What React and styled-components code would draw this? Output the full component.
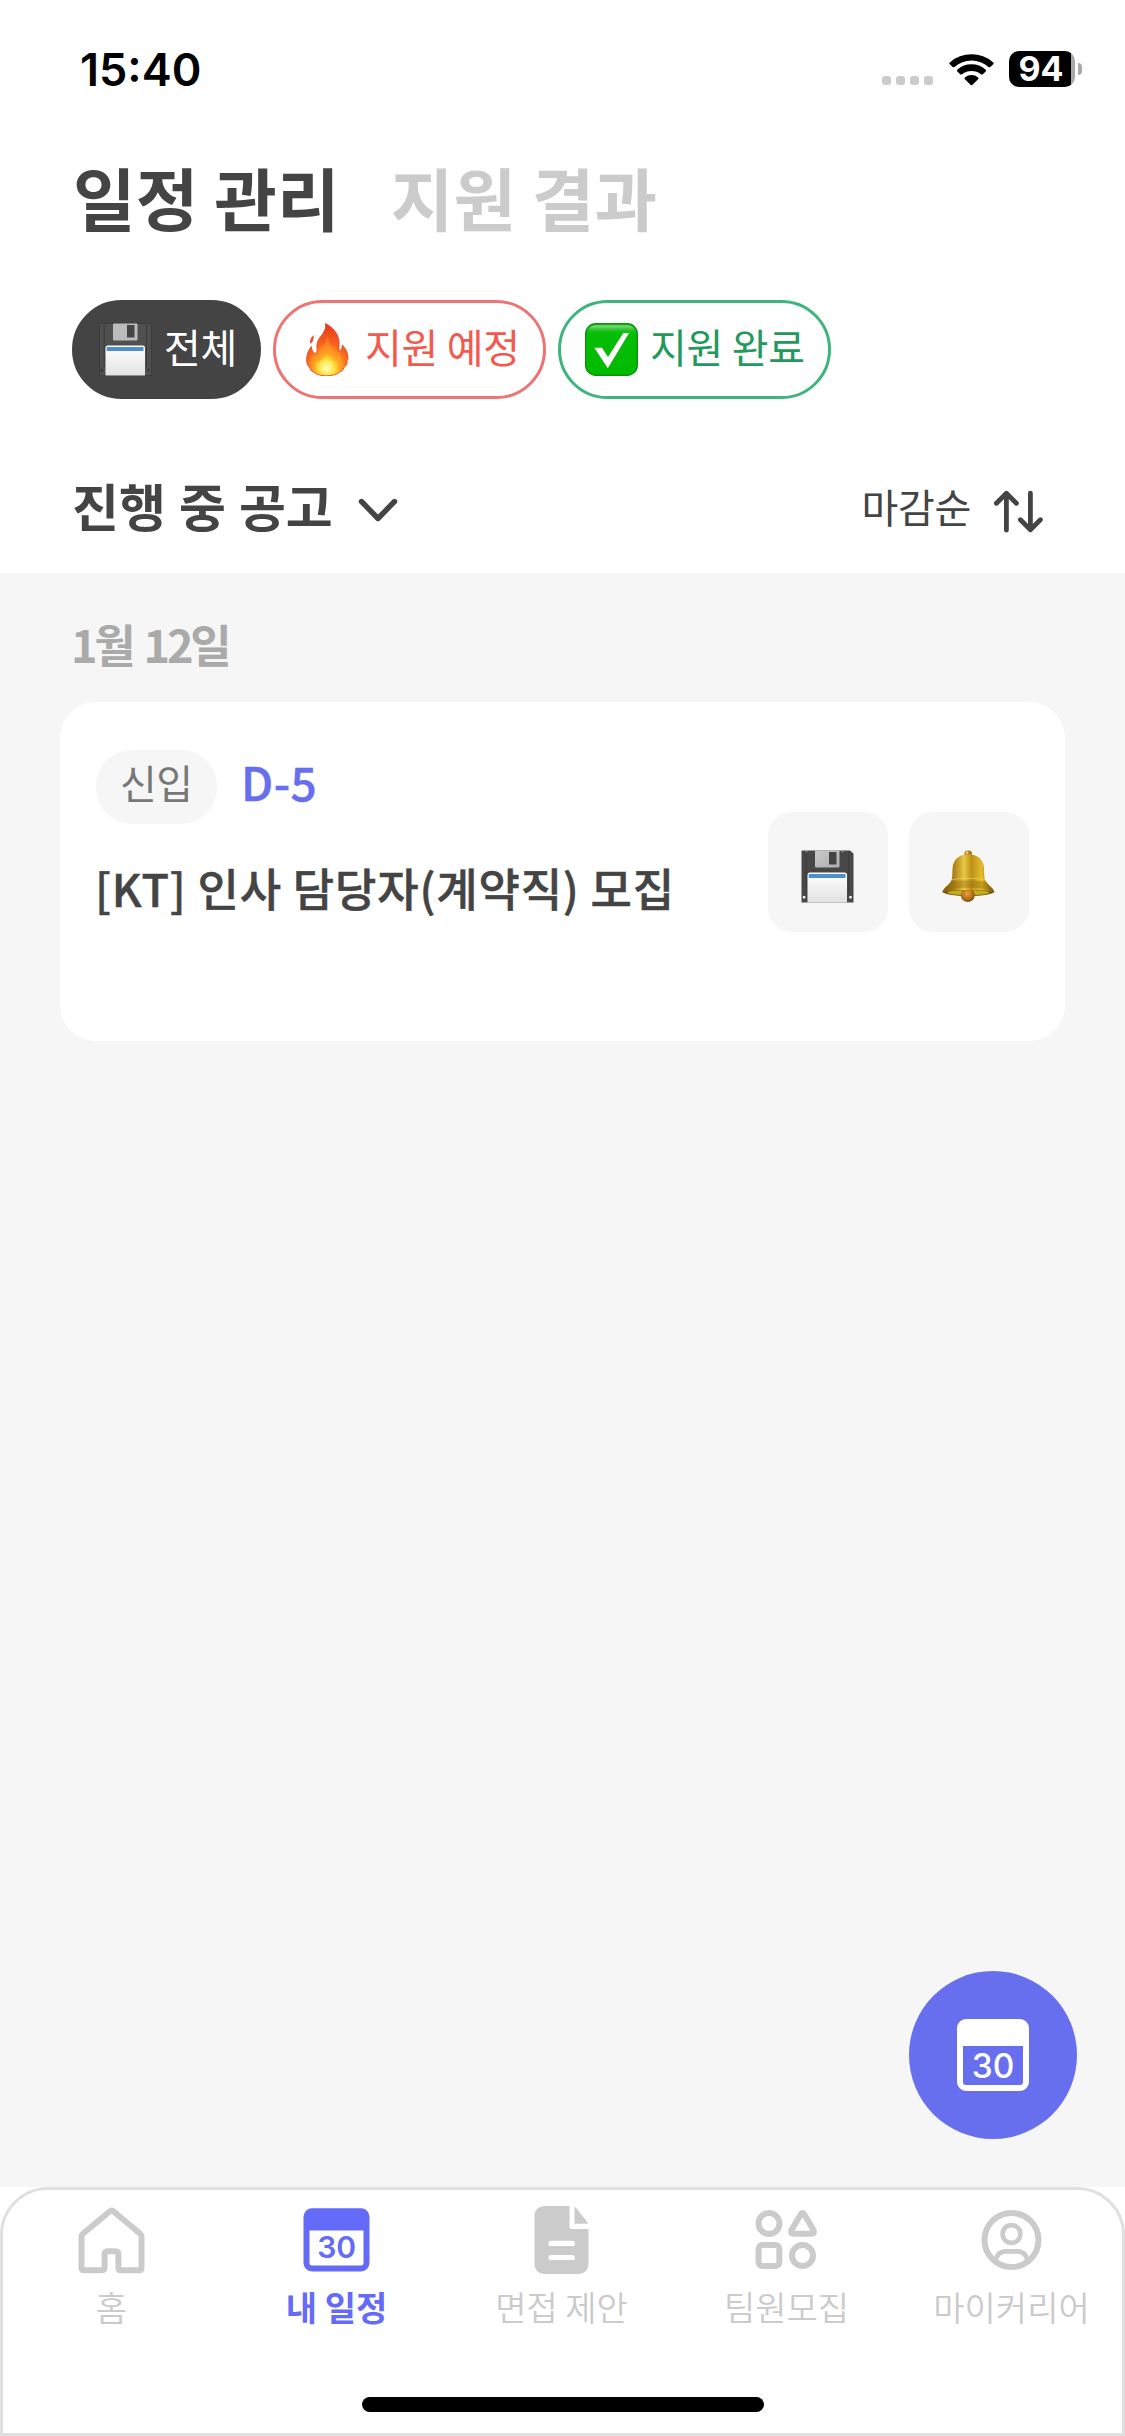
import React, { useState } from 'react';
import styled, { createGlobalStyle } from 'styled-components'

const GlobalStyle = createGlobalStyle`
    * {
        box-sizing: border-box;
    }
    body {
        margin: 0;
        background: #fff;
        color: #444;
        font-family: "Noto Sans CJK KR", "Noto Sans", sans-serif;
    }
    button {
        margin: 0;
        padding: 0;
        border: 0;
        background: none;
        color: inherit;
        font: inherit;
    }
    svg {
        display: block;
        flex: none;
    }
`

const Screen = styled.div`
    position: relative;
    display: flex;
    flex-direction: column;
    width: 1125px;
    height: 2436px;
    overflow: hidden;
`

/* status bar */

const StatusBar = styled.div`
    display: flex;
    align-items: center;
    justify-content: space-between;
    height: 138px;
    padding: 0 43px 0 80px;
    font-family: Inter, sans-serif;
    color: #000;
`

const Clock = styled.span`
    font-size: 45px;
    font-weight: 600;
`

const StatusIcons = styled.div`
    display: flex;
    align-items: center;
`

const SignalDots = styled.div`
    display: flex;
    gap: 5px;
    margin: 23px 15.5px 0 0;
    span {
        width: 9px;
        height: 9px;
        border-radius: 3px;
        background: #cbcbcb;
    }
`

const Battery = styled.div`
    display: flex;
    align-items: center;
    justify-content: center;
    width: 66px;
    height: 36px;
    margin-left: 15.5px;
    padding-right: 2px;
    border-radius: 10px;
    background: linear-gradient(90deg, #000 62px, #a9a9a9 62px);
    color: #fff;
    font-size: 34px;
    font-weight: 700;
    line-height: 36px;
`

const BatteryCap = styled.div`
    width: 4px;
    height: 12px;
    margin-left: 3px;
    border-radius: 0 4px 4px 0;
    background: #a9a9a9;
`

/* header */

const Tabs = styled.div`
    display: flex;
    align-items: center;
    gap: 51px;
    height: 114px;
    padding: 3px 0 0 73px;
`

const Tab = styled.button`
    font-size: 68px;
    font-weight: 700;
    line-height: 100px;
    letter-spacing: 0.2px;
    color: ${props => props.$active ? '#444' : '#cbcbcb'};
`

const Filters = styled.div`
    display: flex;
    gap: 12px;
    margin-top: 48px;
    padding-left: 72px;
`

const Filter = styled.button`
    display: flex;
    align-items: center;
    gap: 12px;
    width: ${props => props.$width}px;
    height: 99px;
    padding-left: 24px;
    border: 3px solid ${props => props.$border};
    border-radius: 50px;
    background: ${props => props.$fill || '#fff'};
    color: ${props => props.$color};
    font-size: 40px;
    letter-spacing: -0.3px;
    white-space: nowrap;
    span {
        padding-bottom: 7px;
    }
`

const Toolbar = styled.div`
    display: flex;
    align-items: center;
    justify-content: space-between;
    height: 174px;
    padding: 50px 79px 0 72px;
`

const GroupSelect = styled.button`
    display: flex;
    align-items: center;
    gap: 23px;
    font-size: 51px;
    font-weight: 700;
    line-height: 70px;
    word-spacing: 1.5px;
    span {
        padding-bottom: 13px;
    }
`

const SortButton = styled.button`
    display: flex;
    align-items: center;
    gap: 21px;
    font-size: 40px;
    letter-spacing: -0.3px;
    span {
        padding-bottom: 10px;
    }
`

/* list */

const List = styled.main`
    position: relative;
    flex: 1;
    padding: 0 60px;
    background: #f6f6f6;
`

const DateHeading = styled.div`
    height: 129px;
    padding: 12px 0 0 11px;
    color: #aaa;
    font-size: 45px;
    font-weight: 700;
    line-height: 117px;
    letter-spacing: -3.2px;
    word-spacing: 4px;
`

const Card = styled.div`
    display: flex;
    justify-content: space-between;
    height: 339px;
    padding: 48px 36px;
    border-radius: 36px;
    background: #fff;
`

const CardMeta = styled.div`
    display: flex;
    align-items: center;
    gap: 24px;
    height: 74px;
`

const Career = styled.span`
    width: 121px;
    height: 74px;
    padding-left: 24px;
    border-radius: 36px;
    background: #f6f6f6;
    color: #777;
    font-size: 40px;
    line-height: 64px;
    letter-spacing: -0.5px;
`

const DDay = styled.span`
    padding-bottom: 13px;
    color: #676fee;
    font-size: 46px;
    font-weight: 500;
    line-height: 60px;
    letter-spacing: 0.5px;
    -webkit-text-stroke: 0.5px currentColor;
`

const CardTitle = styled.div`
    margin: 31px 0 0 -1px;
    font-size: 45px;
    font-weight: 500;
    line-height: 65px;
    letter-spacing: 0.8px;
    -webkit-text-stroke: 0.5px currentColor;
    white-space: nowrap;
`

const CardActions = styled.div`
    display: flex;
    gap: 21px;
    padding-top: 62px;
`

const ActionButton = styled.button`
    display: flex;
    align-items: center;
    justify-content: center;
    width: 120px;
    height: 120px;
    padding: 9px 1px 0 0;
    border-radius: 24px;
    background: #f6f6f6;
`

const CalendarFab = styled.button`
    position: absolute;
    right: 48px;
    bottom: 48px;
    display: flex;
    align-items: center;
    justify-content: center;
    width: 168px;
    height: 168px;
    border-radius: 50%;
    background: #676fee;
`

/* bottom navigation */

const BottomNav = styled.nav`
    display: flex;
    flex-direction: column;
    align-items: center;
    justify-content: space-between;
    height: 249px;
    padding: 14px 0 21px;
    border: 3px solid #e0e0e0;
    border-radius: 48px 48px 0 0;
    background: #fff;
`

const NavItems = styled.div`
    display: grid;
    grid-template-columns: repeat(5, 225px);
`

const NavItem = styled.button`
    display: flex;
    flex-direction: column;
    align-items: center;
    gap: 4px;
    padding-right: 2px;
    color: ${props => props.$active ? '#646bf8' : '#cbcbcb'};
    font-size: 34px;
    font-weight: ${props => props.$active ? 700 : 350};
    line-height: 54px;
    white-space: nowrap;
`

const HomeIndicator = styled.div`
    width: 402px;
    height: 15px;
    border-radius: 8px;
    background: #000;
`

const WifiIcon = () => (
    <svg width="45" height="33" viewBox="0 0 45 33">
        <path d="M0.8 9.4 A33 33 0 0 1 44.2 9.4 Q45.2 10.3 44.2 11.2 L41.4 13.9 Q40.5 14.7 39.5 13.9 A26 26 0 0 0 5.5 13.9 Q4.5 14.7 3.6 13.9 L0.8 11.2 Q-0.2 10.3 0.8 9.4Z" />
        <path d="M8.3 16.7 A21.5 21.5 0 0 1 36.7 16.7 Q37.6 17.6 36.7 18.5 L33.8 21.2 Q32.9 22 31.9 21.2 A15 15 0 0 0 13.1 21.2 Q12.1 22 11.2 21.2 L8.3 18.5 Q7.4 17.6 8.3 16.7Z" />
        <path d="M15.9 24.4 A10.5 10.5 0 0 1 29.1 24.4 Q30 25.3 29.1 26.2 L23.5 31.8 Q22.5 32.8 21.5 31.8 L15.9 26.2 Q15 25.3 15.9 24.4Z" />
    </svg>
)

const FloppyIcon = () => (
    <svg width="53" height="53" viewBox="0 0 53 53">
        <defs>
            <linearGradient id="floppyLabel" x1="0" y1="0" x2="0" y2="1">
                <stop offset="0" stopColor="#fff" />
                <stop offset="1" stopColor="#e2e2e2" />
            </linearGradient>
            <linearGradient id="floppyShutter" x1="0" y1="0" x2="1" y2="1">
                <stop offset="0" stopColor="#c9c9c9" />
                <stop offset="1" stopColor="#aeaeae" />
            </linearGradient>
        </defs>
        <path d="M1 0.5 H49 L52.5 3.5 V52.5 H0.5 V1Z" fill="#484848" />
        <path d="M5.2 1 V44 M47.5 1 V44" stroke="#3b3b3b" strokeWidth="1" />
        <path d="M4.5 0.5 h2 v1.5 h-2z M40.5 0.5 h2 v1.5 h-2z" fill="#999" />
        <rect x="14" y="0.5" width="24.5" height="17" rx="1" fill="url(#floppyShutter)" />
        <rect x="28" y="2" width="7.5" height="12.5" fill="#444" />
        <path d="M6.5 52.5 V25 Q6.5 22.5 9 22.5 H43.5 Q46 22.5 46 25 V52.5Z" fill="url(#floppyLabel)" />
        <rect x="7.7" y="24" width="36.8" height="4" fill="#4b8fcd" />
        <rect x="1.8" y="46" width="2.6" height="2.6" rx="1" fill="#fff" />
        <rect x="48.2" y="46" width="2.6" height="2.6" rx="1" fill="#fff" />
    </svg>
)

const DarkFloppyIcon = () => (
    <svg width="53" height="53" viewBox="0 0 53 53">
        <path d="M1 0.5 H49 L52.5 3.5 V52.5 H0.5 V1Z" fill="#505050" stroke="#383838" strokeWidth="0.8" />
        <path d="M5.2 1 V44 M47.5 1 V44" stroke="#3a3a3a" strokeWidth="1" />
        <rect x="14" y="0.5" width="24.5" height="17" rx="1" fill="#bcbcbc" />
        <rect x="28" y="2" width="7.5" height="12.5" fill="#444" />
        <path d="M6.5 52.5 V25 Q6.5 22.5 9 22.5 H43.5 Q46 22.5 46 25 V52.5Z" fill="url(#floppyLabel)" />
        <rect x="7.7" y="24" width="36.8" height="4" fill="#4b8fcd" />
        <circle cx="3" cy="47.3" r="1.2" fill="#4c4c4c" stroke="#343434" strokeWidth="0.8" />
        <circle cx="49.4" cy="47.3" r="1.2" fill="#4c4c4c" stroke="#343434" strokeWidth="0.8" />
    </svg>
)

const FireIcon = () => (
    <svg width="53" height="53" viewBox="0 0 53 53">
        <defs>
            <radialGradient id="flame" cx="0.5" cy="0.9" r="0.85">
                <stop offset="0" stopColor="#fff56b" />
                <stop offset="0.22" stopColor="#ffd530" />
                <stop offset="0.42" stopColor="#ff9a1f" />
                <stop offset="0.62" stopColor="#f8631c" />
                <stop offset="1" stopColor="#e63c1f" />
            </radialGradient>
            <radialGradient id="flameCore" cx="0.5" cy="0.75" r="0.6">
                <stop offset="0" stopColor="#fffcc0" />
                <stop offset="0.5" stopColor="#ffe84a" />
                <stop offset="1" stopColor="#ffc226" stopOpacity="0" />
            </radialGradient>
        </defs>
        <path d="M25.5 0.5 C32 4 38.5 10 39 19 C39.2 23 38.5 26 39.5 28.5 C42 27.5 42.2 25 42.3 22 C46 26 48.6 31 47.8 36.5 L46.5 38 C48 38.5 47 42 44 44.5 C42.5 47 43.5 47.5 40.5 48.5 C37 51.5 32 52.8 26.5 52.8 C20 52.8 15.5 51 13 48.5 C10 48 11 46.5 9.5 44.5 C7 42 6 38 7 33 C7.5 29 9.5 26.5 11.3 23.5 C11.6 27 13 30 15 30.5 C17 30.3 17.3 28 17 25.5 C16.2 18 20 14.5 23 10.5 C25.3 7.3 26 4 25.5 0.5Z" fill="url(#flame)" stroke="#e8431f" strokeWidth="0.9" />
        <path d="M27 13 C29 22 36 26 34 34 C38 34 39 31 40 29 C42 36 40 42 34 46 H17 C11 41 11 36 13 33 C17 35 20 33 21 28 C22 23 27 20 27 13Z" fill="#ff9c21" opacity="0.5" />
        <path d="M26.5 26 C28 32 33 33 33 38 C36 38 37 36 38 34 C40 43 36 50 27 51.5 C18 51 13 45 15 36 C17 39 20 39 21 37 C24 34 26 31 26.5 26Z" fill="url(#flameCore)" />
        <path d="M13.6 12 C14 15 13.6 18 10.8 21 C9 18 10.5 15 13.6 12Z" fill="#ee5125" />
    </svg>
)

const CheckIcon = () => (
    <svg width="53" height="53" viewBox="0 0 53 53">
        <defs>
            <linearGradient id="checkBox" x1="0" y1="0" x2="0" y2="1">
                <stop offset="0" stopColor="#2fc12f" />
                <stop offset="0.2" stopColor="#06bd06" />
                <stop offset="1" stopColor="#00bb00" />
            </linearGradient>
            <linearGradient id="checkGloss" x1="0" y1="0" x2="0" y2="1">
                <stop offset="0" stopColor="#a5e5a0" />
                <stop offset="1" stopColor="#1ac01a" stopOpacity="0" />
            </linearGradient>
        </defs>
        <rect x="0.7" y="0.7" width="51.6" height="51.6" rx="10" fill="url(#checkBox)" stroke="#0b920d" strokeWidth="1.4" />
        <path d="M3 10 Q3.5 3 10 2.6 H43 Q49.5 3 50 10Z" fill="url(#checkGloss)" opacity="0.8" />
        <path d="M9.3 24.8 H17 L23 34 L38.3 10 H44 L22.8 45.3Z" fill="#fff" />
    </svg>
)

const BellIcon = () => (
    <svg width="53" height="53" viewBox="0 0 53 53">
        <defs>
            <linearGradient id="bellBody" x1="0" y1="0" x2="1" y2="0">
                <stop offset="0" stopColor="#7d5708" />
                <stop offset="0.2" stopColor="#a87a12" />
                <stop offset="0.42" stopColor="#e8c846" />
                <stop offset="0.56" stopColor="#bd9018" />
                <stop offset="0.75" stopColor="#e3bb2b" />
                <stop offset="1" stopColor="#6e510a" />
            </linearGradient>
            <radialGradient id="bellClapper" cx="0.45" cy="0.4" r="0.6">
                <stop offset="0" stopColor="#eba03a" />
                <stop offset="0.6" stopColor="#b8741d" />
                <stop offset="1" stopColor="#7d4d0c" />
            </radialGradient>
        </defs>
        <rect x="22.4" y="0.5" width="7.6" height="7" rx="3.2" fill="#a67c18" />
        <circle cx="25" cy="2.6" r="1.5" fill="#e6c95c" />
        <ellipse cx="26.4" cy="41.6" rx="25.8" ry="4.4" fill="#6d510c" />
        <ellipse cx="26.4" cy="42.6" rx="21" ry="2.6" fill="#c0ae1b" />
        <circle cx="25.8" cy="45" r="7" fill="url(#bellClapper)" />
        <path d="M26.3 4.2 C34 4.2 41.6 8 42 18 C42.4 25 41.6 28.5 44.5 32.2 C47.6 36.4 52.2 38.5 52.4 42.8 C46 40.4 38 40 26.3 40 C15 40 7 40.4 0.4 42.8 C0.8 38.5 5.8 36 8.6 32 C11 28.5 10 24 10.6 18 C11.4 8 18.6 4.2 26.3 4.2Z" fill="url(#bellBody)" />
        <path d="M8.6 32 C18 30 35 30 44.5 32.2 C48 36.5 51 38 52 41 C42 36.5 12 36.5 0.8 41 C2.5 37.5 6.5 35 8.6 32Z" fill="#936609" opacity="0.4" />
        <path d="M10 29.5 Q26 27 43 29.5" fill="none" stroke="#f2d95e" strokeWidth="1.2" opacity="0.6" />
    </svg>
)

const ChevronIcon = () => (
    <svg width="44" height="30" viewBox="0 0 44 30" fill="none" stroke="currentColor" strokeWidth="5.4" strokeLinecap="round" strokeLinejoin="round">
        <path d="M5.5 5.5 L22 22.5 L38.5 5.5" />
    </svg>
)

const SortIcon = () => (
    <svg width="54" height="48" viewBox="0 0 54 48" fill="none" stroke="currentColor" strokeWidth="4.8" strokeLinecap="round" strokeLinejoin="round">
        <path d="M14.4 43.2 V6.5 M4.4 16.2 L14.4 6.2 L24.4 16.2" />
        <path d="M38.4 6.2 V42 M28.4 32.7 L38.4 42.7 L48.4 32.7" />
    </svg>
)

const FabCalendarIcon = () => (
    <svg width="72" height="72" viewBox="0 0 72 72">
        <path fillRule="evenodd" fill="#fff" d="M9 0 H63 A9 9 0 0 1 72 9 V63 A9 9 0 0 1 63 72 H9 A9 9 0 0 1 0 63 V9 A9 9 0 0 1 9 0Z M6 27 V63 Q6 66 9 66 H63 Q66 66 66 63 V27Z" />
        <text x="36" y="58.6" fill="#fff" textAnchor="middle" fontFamily="Inter, sans-serif" fontSize="33.5" fontWeight="500">30</text>
    </svg>
)

const HomeIcon = () => (
    <svg width="72" height="72" viewBox="0 0 72 72" fill="none" stroke="currentColor" strokeWidth="6" strokeLinejoin="round">
        <path d="M34 7.2 Q35.7 5.8 37.4 7.2 L63.6 29.2 Q65.5 30.8 65.5 33 V64 Q65.5 66.3 63.2 66.3 H44.8 Q42.4 66.3 42.4 64 V50.5 Q42.4 47.2 39.2 47.2 H31.8 Q28.6 47.2 28.6 50.5 V63 Q28.6 66.3 25.4 66.3 H8 Q5.5 66.3 5.5 63.8 V33 Q5.5 30.8 7.4 29.2Z" />
    </svg>
)

const CalendarIcon = () => (
    <svg width="72" height="72" viewBox="0 0 72 72" fill="currentColor">
        <path fillRule="evenodd" d="M11 4.2 H60 A8.5 8.5 0 0 1 68.5 12.7 V59 A8.5 8.5 0 0 1 60 67.5 H11 A8.5 8.5 0 0 1 2.5 59 V12.7 A8.5 8.5 0 0 1 11 4.2Z M8.5 26.5 V59 Q8.5 61.5 11 61.5 H60 Q62.5 61.5 62.5 59 V26.5Z" />
        <text x="35.6" y="54.4" textAnchor="middle" fontFamily="Inter, sans-serif" fontSize="30" fontWeight="600">30</text>
    </svg>
)

const DocumentIcon = () => (
    <svg width="72" height="72" viewBox="0 0 72 72" fill="currentColor">
        <path d="M18 2 H43.5 V22.5 Q43.5 25 46 25 H62.5 V60.5 A9.5 9.5 0 0 1 53 70 H18 A9.5 9.5 0 0 1 8.5 60.5 V11.5 A9.5 9.5 0 0 1 18 2Z" />
        <path d="M48.5 3 Q49.5 3 50.3 4 L61.6 18.5 V19.8 H48.5Z" />
        <path d="M25 39.4 H46.4 M25 53.5 H46.4" stroke="#fff" strokeWidth="5.2" strokeLinecap="round" />
    </svg>
)

const ShapesIcon = () => (
    <svg width="72" height="72" viewBox="0 0 72 72" fill="none" stroke="currentColor" strokeWidth="6" strokeLinejoin="round">
        <circle cx="18" cy="19.5" r="10.5" />
        <path d="M49.8 10.2 Q51.5 7.8 53.2 10.2 L62.6 26.3 Q64 29.8 60.5 29.8 H42.5 Q39 29.8 40.4 26.3Z" />
        <rect x="7.6" y="41" width="20.8" height="21" rx="4" />
        <circle cx="51.5" cy="51.5" r="10.5" />
    </svg>
)

const PersonIcon = () => (
    <svg width="72" height="72" viewBox="0 0 72 72" fill="none" stroke="currentColor">
        <circle cx="35.5" cy="36" r="27" strokeWidth="6" />
        <circle cx="35.5" cy="30" r="8.9" strokeWidth="4.6" />
        <path d="M19.7 56 C21 50.5 24.5 47.4 29.5 47.4 H41.5 C46.5 47.4 50 50.5 51.3 56" strokeWidth="4.6" />
    </svg>
)

const filters = [
    { label: '전체', Icon: DarkFloppyIcon, width: 189, border: '#444', fill: '#444', color: '#fff' },
    { label: '지원 예정', Icon: FireIcon, width: 273, border: '#ed7474', color: '#f25a4f' },
    { label: '지원 완료', Icon: CheckIcon, width: 273, border: '#3eb57e', color: '#24995c' },
]

const navItems = [
    { label: '홈', Icon: HomeIcon },
    { label: '내 일정', Icon: CalendarIcon },
    { label: '면접 제안', Icon: DocumentIcon },
    { label: '팀원모집', Icon: ShapesIcon },
    { label: '마이커리어', Icon: PersonIcon },
]

function App() {

    const [tab, setTab] = useState('일정 관리')
    const [page, setPage] = useState('내 일정')

    return (
        <Screen>
            <GlobalStyle />
            <StatusBar>
                <Clock>15:40</Clock>
                <StatusIcons>
                    <SignalDots><span /><span /><span /><span /></SignalDots>
                    <WifiIcon />
                    <Battery>94</Battery>
                    <BatteryCap />
                </StatusIcons>
            </StatusBar>

            <header>
                <Tabs>
                    {['일정 관리', '지원 결과'].map(name =>
                        <Tab key={name} $active={tab === name} onClick={() => setTab(name)}>{name}</Tab>
                    )}
                </Tabs>
                <Filters>
                    {filters.map(({ label, Icon, width, border, fill, color }) =>
                        <Filter key={label} $width={width} $border={border} $fill={fill} $color={color}>
                            <Icon />
                            <span>{label}</span>
                        </Filter>
                    )}
                </Filters>
                <Toolbar>
                    <GroupSelect>
                        <span>진행 중 공고</span>
                        <ChevronIcon />
                    </GroupSelect>
                    <SortButton>
                        <span>마감순</span>
                        <SortIcon />
                    </SortButton>
                </Toolbar>
            </header>

            <List>
                <DateHeading>1월 12일</DateHeading>
                <Card>
                    <div>
                        <CardMeta>
                            <Career>신입</Career>
                            <DDay>D-5</DDay>
                        </CardMeta>
                        <CardTitle>[KT] 인사 담당자(계약직) 모집</CardTitle>
                    </div>
                    <CardActions>
                        <ActionButton><FloppyIcon /></ActionButton>
                        <ActionButton><BellIcon /></ActionButton>
                    </CardActions>
                </Card>
                <CalendarFab>
                    <FabCalendarIcon />
                </CalendarFab>
            </List>

            <BottomNav>
                <NavItems>
                    {navItems.map(({ label, Icon }) =>
                        <NavItem key={label} $active={page === label} onClick={() => setPage(label)}>
                            <Icon />
                            <span>{label}</span>
                        </NavItem>
                    )}
                </NavItems>
                <HomeIndicator />
            </BottomNav>
        </Screen>
    )
}

export default App;
